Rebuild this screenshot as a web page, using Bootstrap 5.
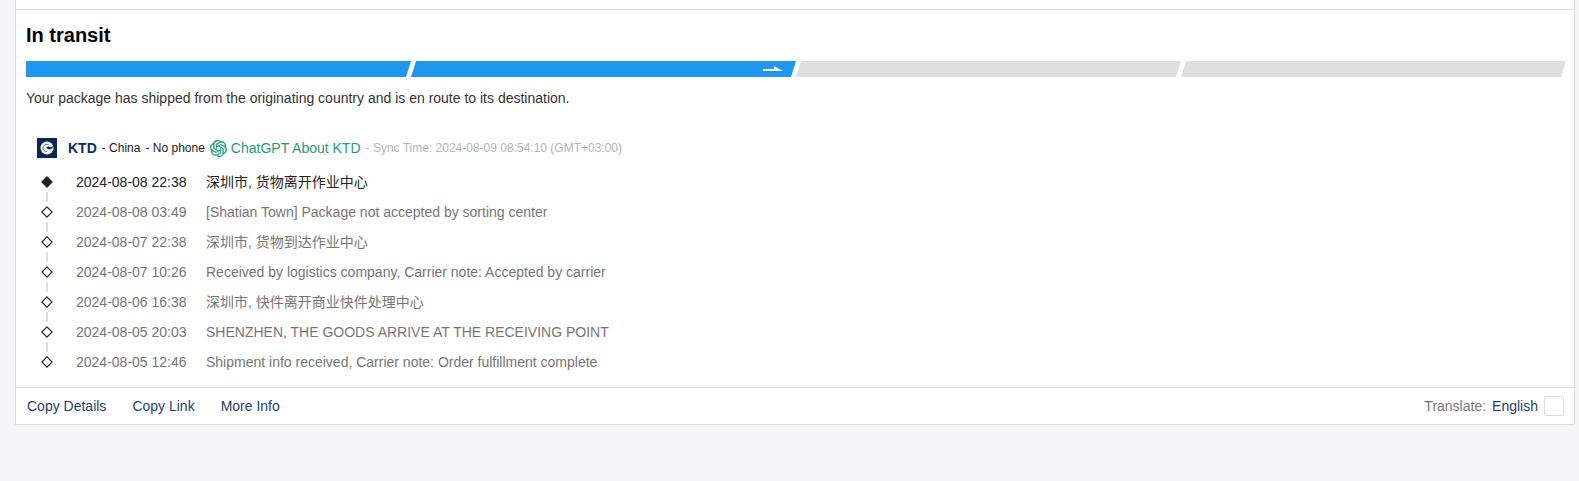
<!DOCTYPE html>
<html lang="en">
<head>
<meta charset="utf-8">
<meta name="viewport" content="width=device-width, initial-scale=1">
<title>Package tracking</title>
<link href="https://cdn.jsdelivr.net/npm/bootstrap@5.3.0/dist/css/bootstrap.min.css" rel="stylesheet">
<style>
  body { background: #f5f5f8; color: #222; font: 14px/20px "Liberation Sans", "Noto Sans CJK SC", sans-serif; }
  a { color: #1d4268; }
  .track-panel { margin: 0 4px 0 15px; background: #fff; border: solid #dcdce2; border-width: 0 1px 1px; }
  .track-top { height: 10px; border-bottom: 1px solid #dcdde0; }
  .track-status { padding: 11px 8px 0 10px; }
  .track-title { font-size: 20px; line-height: 28px; font-weight: 700; color: #000; margin: 0 0 12px; }
  .step { height: 16px; background: #dfdfdf; clip-path: polygon(5px 0, 100% 0, calc(100% - 5px) 100%, 0 100%); }
  .step:first-child { clip-path: polygon(0 0, 100% 0, calc(100% - 5px) 100%, 0 100%); }
  .step.done { background: #2196f0; }
  .step svg { margin-right: 13px; }
  .status-text { margin: 11px 0 0; color: #333; }
  .carrier { margin: 29px 0 0 21px; height: 22px; }
  .carrier-name { color: #0c2a68; margin: 0 5px 0 11px; }
  .meta { font-size: 12px; }
  .origin { margin-right: 5px; }
  .chat-link { color: #1f9b7c; margin: 0 5px 0 5px; }
  .chat-link svg { margin-right: 4px; }
  .sync { color: #b5b5b5; }
  .events { margin: 8px 0 10px 25px; }
  .event { height: 30px; color: #767676; position: relative; }
  .event.latest { color: #222; }
  .event svg { flex: none; margin-right: 23px; }
  .event time { width: 130px; flex: none; }
  .event + .event::before { content: ""; position: absolute; left: 5px; top: -5px; width: 2px; height: 10px; background: #ddd; }
  .track-foot { border-top: 1px solid #dcdde4; padding: 0 10px 0 11px; height: 37px; }
  .foot-links { gap: 26px; }
  .translate-label { color: #777; margin-right: 6px; }
  .form-check-input.auto-translate { width: 20px; height: 20px; margin: 0 0 0 6px; border: 1px solid #ddd; border-radius: 2px; }
</style>
</head>
<body>
<svg class="d-none" aria-hidden="true">
  <symbol id="marker" viewBox="0 0 12 12"><path d="M6 .9 11.100 6 6 11.100 .9 6Z" stroke="#222" stroke-width="1.2"/></symbol>
</svg>
<main class="track-panel">
  <div class="track-top"></div>
  <section class="track-status">
    <h1 class="track-title">In transit</h1>
    <div class="row g-0">
      <div class="col step done"></div>
      <div class="col step done d-flex align-items-center justify-content-end">
        <svg width="20" height="6" viewBox="0 0 20 6" aria-hidden="true"><path d="M0 3H11V.2L20 5H0Z" fill="#fff"/></svg>
      </div>
      <div class="col step"></div>
      <div class="col step"></div>
    </div>
    <p class="status-text">Your package has shipped from the originating country and is en route to its destination.</p>
  </section>
  <div class="carrier d-flex align-items-center">
    <svg width="20" height="20" viewBox="0 0 20 20" aria-hidden="true">
      <rect width="20" height="20" fill="#0a2857"/>
      <circle cx="10" cy="10" r="6.500" fill="#fff"/>
      <path d="M11.500 6.600C8.500 5.600 6 7.500 6 10c0 2.400 2 3.800 4 3.600" fill="none" stroke="#0a2857" stroke-width=".7"/>
      <path d="M8.800 9.700 11.500 8.300 13 9.200 17 8l-2.800 3.200-2.400.3Z" fill="#0a2857"/>
    </svg>
    <strong class="carrier-name">KTD</strong>
    <span class="meta origin">- China</span>
    <span class="meta">- No phone</span>
    <a class="chat-link text-decoration-none d-flex align-items-center" href="#chatgpt">
      <svg width="17" height="17" viewBox="0 0 24 24" fill="currentColor" stroke="currentColor" stroke-width=".4" aria-hidden="true"><path d="M22.282 9.821a5.985 5.985 0 0 0-.516-4.910 6.046 6.046 0 0 0-6.510-2.900A6.065 6.065 0 0 0 4.981 4.180a5.985 5.985 0 0 0-3.998 2.900 6.046 6.046 0 0 0 .743 7.097 5.980 5.980 0 0 0 .510 4.911 6.051 6.051 0 0 0 6.515 2.900A5.985 5.985 0 0 0 13.260 24a6.056 6.056 0 0 0 5.772-4.206 5.990 5.990 0 0 0 3.998-2.900 6.056 6.056 0 0 0-.748-7.073zM13.260 22.430a4.476 4.476 0 0 1-2.876-1.041l.141-.080 4.779-2.758a.795.795 0 0 0 .393-.681v-6.737l2.020 1.169a.071.071 0 0 1 .038.052v5.583a4.504 4.504 0 0 1-4.495 4.494zM3.600 18.304a4.471 4.471 0 0 1-.535-3.014l.142.085 4.783 2.759a.771.771 0 0 0 .780 0l5.843-3.369v2.332a.080.080 0 0 1-.033.062L9.740 19.950a4.500 4.500 0 0 1-6.140-1.646zM2.341 7.896a4.485 4.485 0 0 1 2.366-1.973V11.600a.766.766 0 0 0 .388.677l5.815 3.354-2.020 1.169a.076.076 0 0 1-.071 0l-4.830-2.787A4.504 4.504 0 0 1 2.341 7.872zm16.596 3.856-5.833-3.387L15.119 7.200a.076.076 0 0 1 .071 0l4.830 2.791a4.494 4.494 0 0 1-.676 8.105v-5.678a.790.790 0 0 0-.407-.667zm2.011-3.023-.142-.085-4.774-2.782a.776.776 0 0 0-.785 0L9.409 9.230V6.897a.066.066 0 0 1 .028-.061l4.830-2.787a4.500 4.500 0 0 1 6.680 4.660zM8.307 12.863l-2.020-1.164a.080.080 0 0 1-.038-.057V6.075a4.500 4.500 0 0 1 7.376-3.454l-.142.081-4.779 2.758a.795.795 0 0 0-.393.681zm1.097-2.365 2.602-1.500 2.607 1.500v3l-2.597 1.500-2.607-1.500z"/></svg>ChatGPT About KTD</a>
    <span class="meta sync">- Sync Time: 2024-08-09 08:54:10 (GMT+03:00)</span>
  </div>
  <ol class="events list-unstyled">
    <li class="event latest d-flex align-items-center"><svg width="12" height="12" fill="#222" aria-hidden="true"><use href="#marker"/></svg><time>2024-08-08 22:38</time><span lang="zh-CN">深圳市, 货物离开作业中心</span></li>
    <li class="event d-flex align-items-center"><svg width="12" height="12" fill="#fff" aria-hidden="true"><use href="#marker"/></svg><time>2024-08-08 03:49</time><span>[Shatian Town] Package not accepted by sorting center</span></li>
    <li class="event d-flex align-items-center"><svg width="12" height="12" fill="#fff" aria-hidden="true"><use href="#marker"/></svg><time>2024-08-07 22:38</time><span lang="zh-CN">深圳市, 货物到达作业中心</span></li>
    <li class="event d-flex align-items-center"><svg width="12" height="12" fill="#fff" aria-hidden="true"><use href="#marker"/></svg><time>2024-08-07 10:26</time><span>Received by logistics company, Carrier note: Accepted by carrier</span></li>
    <li class="event d-flex align-items-center"><svg width="12" height="12" fill="#fff" aria-hidden="true"><use href="#marker"/></svg><time>2024-08-06 16:38</time><span lang="zh-CN">深圳市, 快件离开商业快件处理中心</span></li>
    <li class="event d-flex align-items-center"><svg width="12" height="12" fill="#fff" aria-hidden="true"><use href="#marker"/></svg><time>2024-08-05 20:03</time><span>SHENZHEN, THE GOODS ARRIVE AT THE RECEIVING POINT</span></li>
    <li class="event d-flex align-items-center"><svg width="12" height="12" fill="#fff" aria-hidden="true"><use href="#marker"/></svg><time>2024-08-05 12:46</time><span>Shipment info received, Carrier note: Order fulfillment complete</span></li>
  </ol>
  <footer class="track-foot d-flex align-items-center justify-content-between">
    <nav class="foot-links d-flex" aria-label="Package actions">
      <a class="text-decoration-none" href="#details">Copy Details</a>
      <a class="text-decoration-none" href="#link">Copy Link</a>
      <a class="text-decoration-none" href="#info">More Info</a>
    </nav>
    <div class="d-flex align-items-center">
      <label class="translate-label" for="translate">Translate:</label>
      <a class="text-decoration-none" href="#language">English</a>
      <input class="form-check-input auto-translate" type="checkbox" id="translate">
    </div>
  </footer>
</main>
<script src="https://cdn.jsdelivr.net/npm/bootstrap@5.3.0/dist/js/bootstrap.bundle.min.js"></script>
</body>
</html>
